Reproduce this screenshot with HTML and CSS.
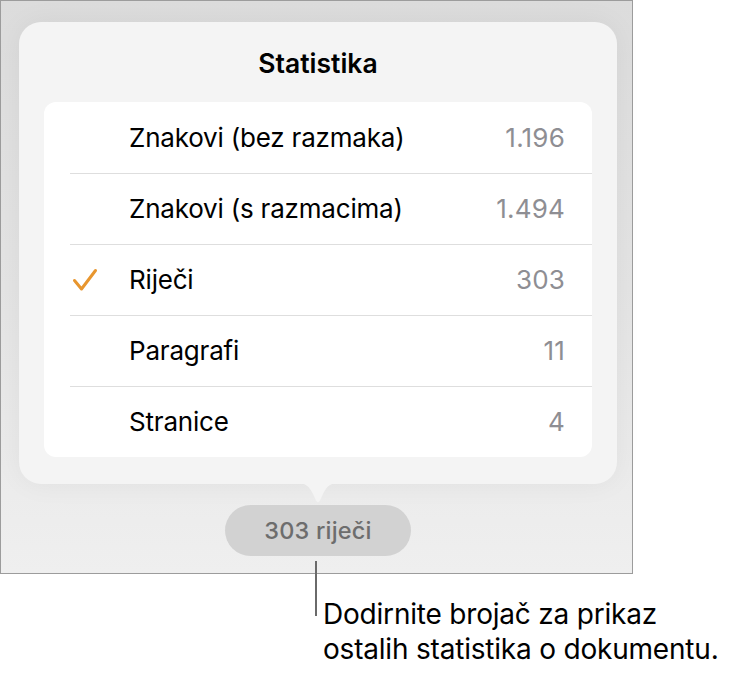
FILE: index.html
```html
<!DOCTYPE html>
<html lang="hr">
<head>
<meta charset="utf-8">
<title>Statistika</title>
<link rel="stylesheet" href="styles.css">
</head>
<body>
<div class="frame">
  <div class="popover">
    <h1 class="title">Statistika</h1>
    <ul class="list">
      <li class="row"><span class="check"></span><span class="label">Znakovi (bez razmaka)</span><span class="value">1.196</span></li>
      <li class="row"><span class="check"></span><span class="label">Znakovi (s razmacima)</span><span class="value">1.494</span></li>
      <li class="row"><span class="check"><svg viewBox="0 0 26 24" width="26" height="24"><path d="M2.5 12.5 L9.5 21 L23.5 2.5" fill="none" stroke="#e8962f" stroke-width="3" stroke-linecap="round" stroke-linejoin="round"/></svg></span><span class="label">Riječi</span><span class="value">303</span></li>
      <li class="row"><span class="check"></span><span class="label">Paragrafi</span><span class="value">11</span></li>
      <li class="row"><span class="check"></span><span class="label">Stranice</span><span class="value">4</span></li>
    </ul>
    <svg class="arrow" viewBox="0 0 46 21" width="46" height="21"><path d="M0 0 C11 0 14 3 18 11 L21 17.5 Q23 21 25 17.5 L28 11 C32 3 35 0 46 0 Z" fill="#f4f4f4"/></svg>
  </div>
  <div class="pill">303 riječi</div>
</div>
<div class="callout">
  <span class="line"></span>
  <p class="caption">Dodirnite brojač za prikaz<br>ostalih statistika o dokumentu.</p>
</div>
</body>
</html>
```
FILE: styles.css
```css
* { box-sizing: border-box; }
html, body { margin: 0; padding: 0; background: #fff; }
body { font-family: Inter, "Noto Sans", "Liberation Sans", sans-serif; color: #000; }

.frame {
  width: 633px;
  height: 574px;
  border: 1px solid #9c9c9c;
  background: linear-gradient(180deg, #dcdcdc 0%, #e4e4e4 50%, #efefef 100%);
  padding: 21px 0 0 18px;
  display: flex;
  flex-direction: column;
  align-items: flex-start;
}

.popover {
  position: relative;
  width: 598px;
  height: 462px;
  background: #f4f4f4;
  border-radius: 22px;
  padding: 0 25px;
  box-shadow: 0 0 28px rgba(0,0,0,0.05);
}

.title {
  margin: 0;
  height: 80px;
  display: flex;
  align-items: center;
  justify-content: center;
  font-size: 26.5px;
  font-weight: 600;
  letter-spacing: 0;
  padding-top: 2px;
}

.list {
  list-style: none;
  margin: 0;
  padding: 0;
  background: #fff;
  border-radius: 12px;
  overflow: hidden;
}

.row {
  height: 71px;
  display: flex;
  align-items: center;
  padding-right: 27px;
  position: relative;
}
.row + .row::before {
  content: "";
  position: absolute;
  left: 26px;
  right: 0;
  top: 0;
  height: 1px;
  background: #dedede;
}

.check {
  width: 85px;
  padding-left: 28px;
  display: flex;
  align-items: center;
}
.check svg { display: block; }

.label {
  flex: 1;
  font-size: 26px;
  letter-spacing: -0.2px;
}
.value {
  font-size: 26px;
  color: #8e8e93;
  letter-spacing: 0.2px;
}

.arrow {
  position: absolute;
  left: 276px;
  top: 461px;
  display: block;
}

.pill {
  margin-top: 21px;
  margin-left: 206px;
  width: 186px;
  height: 51px;
  border-radius: 26px;
  background: #d2d2d2;
  color: #6d6d6d;
  font-size: 23.5px;
  font-weight: 500;
  display: flex;
  align-items: center;
  justify-content: center;
  letter-spacing: 0.2px;
}

.callout {
  position: relative;
  padding-left: 323px;
}
.line {
  position: absolute;
  left: 315px;
  top: -13px;
  width: 2px;
  height: 55px;
  background: #6a6a6a;
}
.caption {
  margin: 0;
  padding-top: 23px;
  font-size: 28px;
  line-height: 35px;
  letter-spacing: -0.2px;
  color: #000;
}
```
